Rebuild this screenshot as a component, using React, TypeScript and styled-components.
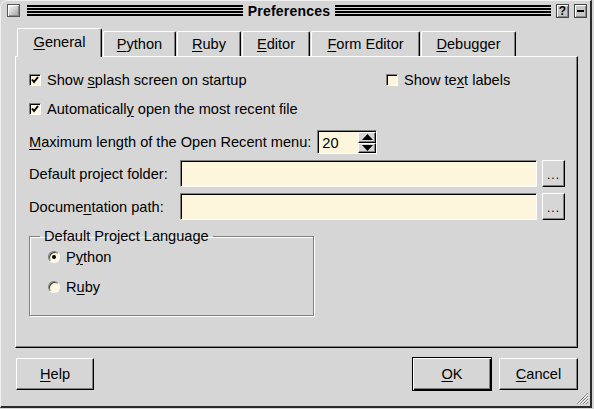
import React from 'react';
import styled, { createGlobalStyle, css } from 'styled-components';

const Global = createGlobalStyle`
  html, body { margin: 0; padding: 0; background: #d6d6d6; }
  body { font-family: "Liberation Sans", Arial, sans-serif; font-size: 14.6px; color: #000; }
  * { box-sizing: border-box; }
`;

const BG = '#d6d6d6';
const CREAM = '#fdf5dc';

const raised = css`
  border: 1px solid;
  border-color: #fff #000 #000 #fff;
  box-shadow: inset -1px -1px 0 #808080;
`;
const sunken = css`
  border: 1px solid;
  border-color: #808080 #fff #fff #808080;
  box-shadow: inset 1px 1px 0 #000;
`;

const Window = styled.div`
  position: relative;
  width: 592px;
  height: 408px;
  background: ${BG};
  border-top-left-radius: 7px;
  border-top: 1px solid #f0f0f0;
  border-left: 1px solid #f0f0f0;
  border-right: 2px solid #2a2a2a;
  border-bottom: 2px solid #2a2a2a;
  display: flex;
  flex-direction: column;
`;

const TitleBar = styled.div`
  height: 19px;
  display: flex;
  align-items: center;
  padding: 0 3px 0 6px;
  gap: 5px;
`;

const CloseBox = styled.div`
  width: 13px;
  height: 13px;
  border: 1px solid #555;
  background: linear-gradient(135deg, #fdfdfd 0%, #cfcfcf 50%, #9a9a9a 100%);
  box-shadow: inset 1px 1px 0 #fff, inset -1px -1px 0 #8a8a8a;
  margin-right: 2px;
`;

const Stripes = styled.div`
  flex: 1;
  height: 11px;
  background: repeating-linear-gradient(to bottom, #000 0 2px, transparent 2px 3px);
`;

const Title = styled.div`
  font-weight: bold;
  font-size: 14px;
  letter-spacing: 0.2px;
  line-height: 16px;
`;

const TitleButton = styled.div`
  width: 13px;
  height: 14px;
  border: 1px solid #444;
  background: #c8c8c8;
  box-shadow: inset 1px 1px 0 #fff, inset -1px -1px 0 #888;
  display: flex;
  align-items: center;
  justify-content: center;
  font-weight: bold;
  font-size: 12px;
  line-height: 12px;
`;

const MinBar = styled.div`
  width: 7px;
  height: 2px;
  background: #000;
`;

const Body = styled.div`
  flex: 1;
  display: flex;
  flex-direction: column;
  padding: 9px 12px 0 14px;
`;

const TabBar = styled.div`
  display: flex;
  align-items: flex-end;
  height: 28px;
  padding-left: 2px;
  gap: 1px;
  position: relative;
  z-index: 1;
  margin-bottom: -1px;
`;

const Tab = styled.div<{ $active?: boolean; $w: number }>`
  width: ${p => p.$w}px;
  height: ${p => (p.$active ? 29 : 25)}px;
  margin-bottom: ${p => (p.$active ? 0 : 1)}px;
  background: ${BG};
  border: 1px solid;
  border-color: #fff #000 transparent #fff;
  border-bottom: none;
  border-radius: 2px 2px 0 0;
  box-shadow: inset -1px 0 0 #808080;
  display: flex;
  align-items: ${p => (p.$active ? 'flex-start' : 'center')};
  padding-top: ${p => (p.$active ? 5 : 0)}px;
  justify-content: center;
`;

const Panel = styled.div`
  height: 292px;
  border: 1px solid;
  border-color: #fff #000 #000 #fff;
  box-shadow: inset -1px -1px 0 #808080;
  padding: 11px 12px 0 13px;
  display: flex;
  flex-direction: column;
`;

const Row = styled.div<{ $h: number; $mt?: number }>`
  height: ${p => p.$h}px;
  margin-top: ${p => p.$mt ?? 0}px;
  display: flex;
  align-items: center;
`;

const SplitRow = styled.div`
  height: 24px;
  display: grid;
  grid-template-columns: 357px auto;
  align-items: center;
`;

const Check = styled.label`
  display: flex;
  align-items: center;
  gap: 6px;
  white-space: nowrap;
`;

const Box = styled.span`
  width: 12px;
  height: 12px;
  background: ${CREAM};
  ${sunken};
  display: flex;
  align-items: center;
  justify-content: center;
`;

const U = styled.span`
  text-decoration: underline;
  text-underline-offset: 2px;
`;

const Spacer = styled.div<{ $w?: number }>`
  ${p => (p.$w ? `width:${p.$w}px;` : 'flex: 1;')}
`;

const Spin = styled.div`
  display: flex;
  width: 60px;
  height: 24px;
  margin-left: 6px;
  background: ${CREAM};
  ${sunken};
`;

const SpinText = styled.div`
  flex: 1;
  padding-left: 4px;
  padding-top: 1px;
  display: flex;
  align-items: center;
`;

const SpinArrows = styled.div`
  width: 18px;
  display: flex;
  flex-direction: column;
  padding: 1px 0 0 0;
`;

const Arrow = styled.div`
  flex: 1;
  background: ${BG};
  ${raised};
  display: flex;
  align-items: center;
  justify-content: center;
`;

const FieldLabel = styled.div`
  width: 151px;
  white-space: nowrap;
`;

const Field = styled.div`
  flex: 1;
  height: 27px;
  background: ${CREAM};
  ${sunken};
`;

const Browse = styled.div`
  width: 23px;
  height: 27px;
  margin-left: 5px;
  ${raised};
  display: flex;
  align-items: flex-end;
  justify-content: center;
  padding-bottom: 6px;
  font-size: 12px;
  letter-spacing: 1px;
  line-height: 10px;
`;

const Group = styled.fieldset`
  margin: 8px 0 0 0;
  width: 285px;
  height: 88px;
  padding: 0 0 0 18px;
  border: 1px solid #808080;
  box-shadow: 1px 1px 0 #fff, inset 1px 1px 0 #fff;
  display: flex;
  flex-direction: column;
`;

const Legend = styled.legend`
  margin-left: -8px;
  padding: 0 4px;
`;

const RadioRow = styled.label<{ $mt: number }>`
  display: flex;
  align-items: center;
  gap: 6px;
  margin-top: ${p => p.$mt}px;
  height: 16px;
`;

const Radio = styled.span<{ $on?: boolean }>`
  width: 12px;
  height: 12px;
  border-radius: 50%;
  border: 1px solid;
  border-color: #808080 #fff #fff #808080;
  box-shadow: inset 1px 1px 0 #404040;
  background: ${CREAM};
  display: flex;
  align-items: center;
  justify-content: center;
  &::after {
    content: '';
    width: 4px;
    height: 4px;
    border-radius: 50%;
    background: ${p => (p.$on ? '#000' : 'transparent')};
  }
`;

const ButtonRow = styled.div`
  display: flex;
  align-items: center;
  margin-top: 9px;
  padding-left: 1px;
`;

const Button = styled.div<{ $w: number; $default?: boolean }>`
  width: ${p => p.$w}px;
  height: ${p => (p.$default ? 34 : 32)}px;
  ${raised};
  display: flex;
  align-items: center;
  justify-content: center;
  ${p =>
    p.$default &&
    css`
      border: 1px solid #000;
      box-shadow: inset 1px 1px 0 #fff, inset -1px -1px 0 #000, inset -2px -2px 0 #808080;
    `}
`;

const Grip = styled.svg`
  position: absolute;
  right: 1px;
  bottom: 1px;
`;

const CheckMark = () => (
  <svg width="8" height="8" viewBox="0 0 8 8">
    <polyline points="1,3.5 3,6 7,1" fill="none" stroke="#000" strokeWidth="2" />
  </svg>
);

const Tri = ({ up }: { up?: boolean }) => (
  <svg width="11" height="6" viewBox="0 0 11 6">
    <polygon points={up ? '5.5,0 11,6 0,6' : '0,0 11,0 5.5,6'} fill="#000" />
  </svg>
);

export default function App() {
  return (
    <>
      <Global />
      <Window>
        <TitleBar>
          <CloseBox />
          <Stripes />
          <Title>Preferences</Title>
          <Stripes />
          <TitleButton>?</TitleButton>
          <TitleButton>
            <MinBar />
          </TitleButton>
        </TitleBar>
        <Body>
          <TabBar>
            <Tab $active $w={85}><span><U>G</U>eneral</span></Tab>
            <Tab $w={73}><span><U>P</U>ython</span></Tab>
            <Tab $w={64}><span><U>R</U>uby</span></Tab>
            <Tab $w={68}><span><U>E</U>ditor</span></Tab>
            <Tab $w={109}><span><U>F</U>orm Editor</span></Tab>
            <Tab $w={95}><span><U>D</U>ebugger</span></Tab>
          </TabBar>
          <Panel>
            <SplitRow>
              <Check>
                <Box><CheckMark /></Box>
                <span>Show <U>s</U>plash screen on startup</span>
              </Check>
              <Check>
                <Box />
                <span>Show te<U>x</U>t labels</span>
              </Check>
            </SplitRow>
            <Row $h={24} $mt={5}>
              <Check>
                <Box><CheckMark /></Box>
                <span>Automaticall<U>y</U> open the most recent file</span>
              </Check>
            </Row>
            <Row $h={24} $mt={9}>
              <span><U>M</U>aximum length of the Open Recent menu:</span>
              <Spin>
                <SpinText>20</SpinText>
                <SpinArrows>
                  <Arrow><Tri up /></Arrow>
                  <Arrow><Tri /></Arrow>
                </SpinArrows>
              </Spin>
            </Row>
            <Row $h={27} $mt={6}>
              <FieldLabel>Default project folder:</FieldLabel>
              <Field />
              <Browse>...</Browse>
            </Row>
            <Row $h={27} $mt={6}>
              <FieldLabel>Docume<U>n</U>tation path:</FieldLabel>
              <Field />
              <Browse>...</Browse>
            </Row>
            <Group>
              <Legend>Default Project Language</Legend>
              <RadioRow $mt={5}>
                <Radio $on />
                <span>P<U>y</U>thon</span>
              </RadioRow>
              <RadioRow $mt={14}>
                <Radio />
                <span>R<U>u</U>by</span>
              </RadioRow>
            </Group>
          </Panel>
          <ButtonRow>
            <Button $w={78}><span><U>H</U>elp</span></Button>
            <Spacer />
            <Button $w={80} $default><span><U>O</U>K</span></Button>
            <Spacer $w={7} />
            <Button $w={79}><span><U>C</U>ancel</span></Button>
          </ButtonRow>
        </Body>
        <Grip width="14" height="14" viewBox="0 0 14 14">
          <path d="M13 2 L2 13 M13 5 L5 13 M13 8 L8 13 M13 11 L11 13" stroke="#808080" strokeWidth="1" />
          <path d="M13 3 L3 13 M13 6 L6 13 M13 9 L9 13" stroke="#fff" strokeWidth="1" />
        </Grip>
      </Window>
    </>
  );
}
